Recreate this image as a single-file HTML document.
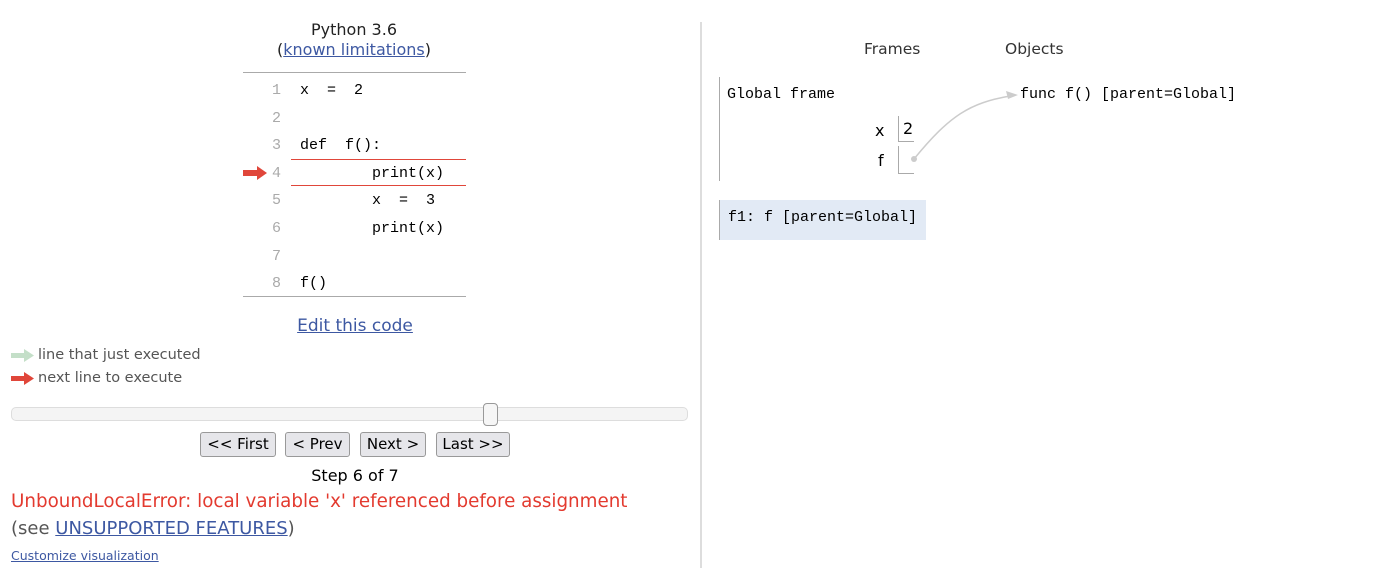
<!DOCTYPE html>
<html><head><meta charset="utf-8"><style>
body{margin:0;width:1390px;height:568px;background:#fff;font-family:"DejaVu Sans",sans-serif;position:relative;overflow:hidden;color:#333}
.a{position:absolute;white-space:pre}
.mono{font-family:"Liberation Mono",monospace;font-size:15px;color:#000}
.ln{font-family:"Liberation Mono",monospace;font-size:15px;color:#aaa}
a{color:#3D58A2}
.btn{position:absolute;top:432px;height:23px;border:1px solid #999;border-radius:3px;background:#e6e6ea;font-size:15px;color:#000;text-align:center;line-height:23px}
</style></head><body>
<div class="a" style="left:0;top:20px;width:708px;text-align:center;font-size:16px;line-height:20px;color:#222">Python 3.6
(<a href="#">known limitations</a>)</div>
<div class="a" style="left:243px;top:72px;width:223px;height:1px;background:#aaa"></div>
<div class="a" style="left:243px;top:296px;width:223px;height:1px;background:#aaa"></div>
<div class="a" style="left:291px;top:159px;width:175px;height:1px;background:#e0463a"></div>
<div class="a" style="left:291px;top:185px;width:175px;height:1px;background:#e0463a"></div>
<div class="a ln" style="left:272px;top:77px;line-height:27.6px">1
2
3
4
5
6
7
8</div>
<div class="a mono" style="left:300px;top:77px;line-height:27.6px">x  =  2

def  f():
        print(x)
        x  =  3
        print(x)

f()</div>
<svg class="a" style="left:243px;top:166px" width="24" height="14"><path d="M0 4h14V0l10 7-10 7v-4H0z" fill="#e0463a"/></svg>
<div class="a" style="left:0;top:316px;width:710px;text-align:center;font-size:17px"><a href="#">Edit this code</a></div>
<svg class="a" style="left:11px;top:349px" width="23" height="13"><path d="M0 4h13V0l10 6.5-10 6.5V9H0z" fill="#c4dfc8"/></svg>
<div class="a" style="left:38px;top:347px;font-size:14.5px;color:#555">line that just executed</div>
<svg class="a" style="left:11px;top:372px" width="23" height="13"><path d="M0 4h13V0l10 6.5-10 6.5V9H0z" fill="#e0463a"/></svg>
<div class="a" style="left:38px;top:370px;font-size:14.5px;color:#555">next line to execute</div>
<div class="a" style="left:11px;top:407px;width:675px;height:12px;border:1px solid #ddd;border-radius:5px;background:#f4f4f4"></div>
<div class="a" style="left:483px;top:403px;width:13px;height:21px;border:1px solid #999;border-radius:4px;background:#f6f6f6"></div>
<div class="btn" style="left:200px;width:74px">&lt;&lt; First</div>
<div class="btn" style="left:285px;width:63px">&lt; Prev</div>
<div class="btn" style="left:360px;width:64px">Next &gt;</div>
<div class="btn" style="left:436px;width:72px">Last &gt;&gt;</div>
<div class="a" style="left:0;top:466px;width:710px;text-align:center;font-size:16px;color:#000">Step 6 of 7</div>
<div class="a" style="left:11px;top:491px;font-size:18.3px;color:#e33a2f">UnboundLocalError: local variable 'x' referenced before assignment</div>
<div class="a" style="left:11px;top:518px;font-size:18px;color:#555">(see <a href="#">UNSUPPORTED FEATURES</a>)</div>
<div class="a" style="left:11px;top:548px;font-size:12.5px"><a href="#">Customize visualization</a></div>
<div class="a" style="left:700px;top:22px;width:2px;height:546px;background:#ddd"></div>
<div class="a" style="left:864px;top:40px;font-size:15.5px">Frames</div>
<div class="a" style="left:1005px;top:40px;font-size:15.5px">Objects</div>
<div class="a" style="left:719px;top:77px;width:1px;height:104px;background:#aaa"></div>
<div class="a mono" style="left:727px;top:86px">Global frame</div>
<div class="a" style="left:875px;top:121px;font-size:16px;color:#000">x</div>
<div class="a" style="left:898px;top:116px;width:1px;height:26px;background:#aaa"></div>
<div class="a" style="left:898px;top:141px;width:16px;height:1px;background:#aaa"></div>
<div class="a" style="left:903px;top:119px;font-size:16px;color:#000">2</div>
<div class="a" style="left:878px;top:151px;font-size:16px;color:#000">f</div>
<div class="a" style="left:898px;top:146px;width:1px;height:27px;background:#aaa"></div>
<div class="a" style="left:898px;top:173px;width:16px;height:1px;background:#aaa"></div>
<svg class="a" style="left:900px;top:85px" width="120" height="80"><circle cx="14" cy="74" r="3" fill="#ccc"/><path d="M14 74C50 30 70 18 110 11" stroke="#ccc" stroke-width="1.5" fill="none"/><path d="M118 10l-12-4 2 8z" fill="#ccc"/></svg>
<div class="a mono" style="left:1020px;top:86px">func f() [parent=Global]</div>
<div class="a" style="left:719px;top:200px;width:206px;height:40px;background:#e2eaf5;border-left:1px solid #aaa"></div>
<div class="a mono" style="left:728px;top:209px">f1: f [parent=Global]</div>
</body></html>
